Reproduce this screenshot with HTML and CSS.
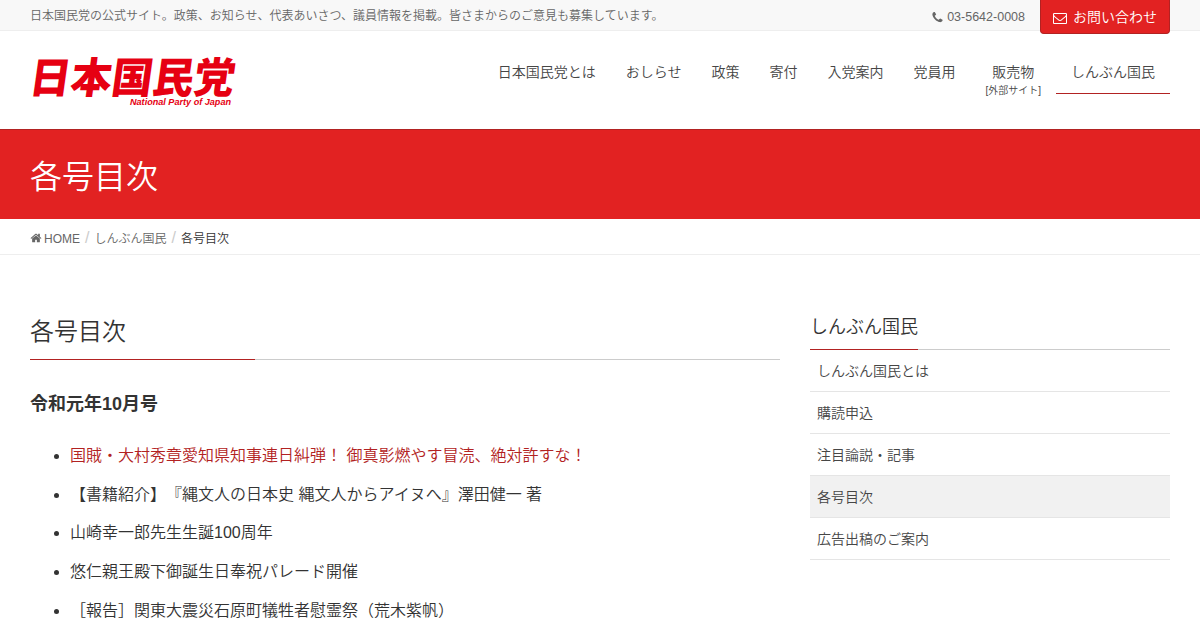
FILE: index.html
```html
<!DOCTYPE html>
<html lang="ja">
<head>
    <meta charset="UTF-8">
    <meta name="viewport" content="width=device-width, initial-scale=1.0">
    <title>各号目次 | 日本国民党</title>
    <link rel="stylesheet" href="styles.css">
</head>
<body>
    <div class="topbar">
        <div class="container topbar-inner">
            <p class="description">日本国民党の公式サイト。政策、お知らせ、代表あいさつ、議員情報を掲載。皆さまからのご意見も募集しています。</p>
            <div class="contact">
                <span class="tel">
                    <svg class="icon-phone" viewBox="0 0 1792 1792"><path d="M1600 1240q0 27-10 70.5t-21 68.5q-21 50-122 106-94 51-186 51-27 0-53-3.5t-57.5-12.5-47-14.5-55.5-20.5-49-18q-98-35-175-83-127-79-264-216t-216-264q-48-77-83-175-3-9-18-49t-20.5-55.5-14.5-47-12.5-57.5-3.5-53q0-92 51-186 56-101 106-122 25-11 68.5-21t70.5-10q14 0 21 3 18 6 53 76 11 19 30 54t35 63.5 31 53.5q3 4 17.5 25t21.5 35.5 7 28.5q0 20-28.5 50t-62 55-62 53-28.5 46q0 9 5 22.5t8.5 20.5 14 24 11.5 19q76 137 174 235t235 174q2 1 19 11.5t24 14 20.5 8.5 22.5 5q18 0 46-28.5t53-62 55-62 50-28.5q14 0 28.5 7t35.5 21.5 25 17.5q25 15 53.5 31t63.5 35 54 30q70 35 76 53 3 7 3 21z"/></svg>
                    03-5642-0008
                </span>
                <a class="btn" href="#">
                    <svg class="icon-mail" viewBox="0 0 1792 1792"><path d="M1664 1504v-768q-32 36-69 66-268 206-426 338-51 43-83 67t-86.5 48.5-102.5 24.5h-2q-48 0-102.5-24.5t-86.5-48.5-83-67q-158-132-426-338-37-30-69-66v768q0 13 9.5 22.5t22.5 9.5h1472q13 0 22.5-9.5t9.5-22.5zm0-1051v-24.5l-.5-13-3-12.5-5.5-9-9-7.5-14-2.5h-1472q-13 0-22.5 9.5t-9.5 22.5q0 168 147 284 193 152 401 317 6 5 35 29.5t46 37.5 44.5 31.5 50.5 27.5 43 9h2q20 0 43-9t50.5-27.5 44.5-31.5 46-37.5 35-29.5q208-165 401-317 54-43 100.5-115.5t46.5-131.5zm128-37v1088q0 66-47 113t-113 47h-1472q-66 0-113-47t-47-113v-1088q0-66 47-113t113-47h1472q66 0 113 47t47 113z"/></svg>
                    お問い合わせ
                </a>
            </div>
        </div>
    </div>

    <header class="site-header">
        <div class="container header-inner">
            <a class="logo" href="#">
                <svg width="230" height="80" viewBox="0 0 230 80">
                    <text class="logo-name" transform="translate(-2 54) skewX(-8)" textLength="205" lengthAdjust="spacingAndGlyphs">日本国民党</text>
                    <text class="logo-sub" x="100" y="66" textLength="101" lengthAdjust="spacingAndGlyphs">National Party of Japan</text>
                </svg>
            </a>
            <nav>
                <ul class="menu">
                    <li><a href="#">日本国民党とは</a></li>
                    <li><a href="#">おしらせ</a></li>
                    <li><a href="#">政策</a></li>
                    <li><a href="#">寄付</a></li>
                    <li><a href="#">入党案内</a></li>
                    <li><a href="#">党員用</a></li>
                    <li><a href="#">販売物<span class="note">[外部サイト]</span></a></li>
                    <li class="current"><a href="#">しんぶん国民</a></li>
                </ul>
            </nav>
        </div>
    </header>

    <div class="page-header">
        <div class="container">
            <div class="page-title">各号目次</div>
        </div>
    </div>

    <div class="breadcrumb">
        <ol class="container">
            <li><a href="#"><svg class="icon-home" viewBox="0 0 1792 1792"><path d="M1472 992v480q0 26-19 45t-45 19h-384v-384h-256v384h-384q-26 0-45-19t-19-45v-480q0-1 .5-3t.5-3l575-474 575 474q1 2 1 6zm223-69l-62 74q-8 9-21 11h-3q-13 0-21-7l-692-577-692 577q-12 8-24 7-13-2-21-11l-62-74q-8-10-7-23.5t11-21.5l719-599q32-26 76-26t76 26l244 204v-195q0-14 9-23t23-9h192q14 0 23 9t9 23v408l219 182q10 8 11 21.5t-7 23.5z"/></svg>HOME</a></li>
            <li><a href="#">しんぶん国民</a></li>
            <li>各号目次</li>
        </ol>
    </div>

    <div class="container content">
        <main>
            <h1>各号目次</h1>
            <h4>令和元年10月号</h4>
            <ul class="articles">
                <li><a href="#">国賊・大村秀章愛知県知事連日糾弾！ 御真影燃やす冒涜、絶対許すな！</a></li>
                <li>【書籍紹介】『縄文人の日本史 縄文人からアイヌへ』澤田健一 著</li>
                <li>山崎幸一郎先生生誕100周年</li>
                <li>悠仁親王殿下御誕生日奉祝パレード開催</li>
                <li>［報告］関東大震災石原町犠牲者慰霊祭（荒木紫帆）</li>
            </ul>
        </main>

        <aside>
            <h2><a href="#">しんぶん国民</a></h2>
            <ul class="side-menu">
                <li><a href="#">しんぶん国民とは</a></li>
                <li><a href="#">購読申込</a></li>
                <li><a href="#">注目論説・記事</a></li>
                <li class="current"><a href="#">各号目次</a></li>
                <li><a href="#">広告出稿のご案内</a></li>
            </ul>
        </aside>
    </div>
</body>
</html>
```
FILE: styles.css
```css
:root {
    --key-color: #e22222;
    --key-dark: #b22222;
    --text-color: #333;
}

* {
    box-sizing: border-box;
}

html {
    overflow: hidden;
}

body {
    font-family: "Liberation Sans", "Noto Sans CJK JP", sans-serif;
    font-size: 16px;
    font-weight: 350;
    line-height: 1.7;
    text-spacing-trim: space-all;
    color: var(--text-color);
    background-color: #fff;
    margin: 0;
    height: 630px;
    overflow: hidden;
}

a {
    color: inherit;
    text-decoration: none;
}

ul, ol {
    list-style: none;
    margin: 0;
    padding: 0;
}

svg {
    fill: currentColor;
}

.container {
    width: 1140px;
    margin: 0 auto;
}

.topbar {
    height: 31px;
    background-color: #f8f8f8;
    border-bottom: 1px solid #eee;
    color: #666;
    font-size: 12px;
}

.topbar-inner {
    display: flex;
    justify-content: space-between;
    align-items: flex-start;
}

.description {
    margin: 0;
    line-height: 32px;
}

.contact {
    display: flex;
    gap: 15px;
}

.tel {
    display: flex;
    align-items: center;
    gap: 3px;
    font-size: 12.5px;
    line-height: 34px;
}

.icon-phone {
    width: 13px;
    height: 13px;
}

.btn {
    display: flex;
    align-items: center;
    gap: 6px;
    width: 130px;
    height: 34px;
    padding: 2px 0 0 12px;
    background-color: var(--key-color);
    border: 1px solid var(--key-dark);
    border-top: 0;
    border-radius: 0 0 4px 4px;
    color: #fff;
    font-size: 14px;
}

.icon-mail {
    width: 14px;
    height: 14px;
}

.site-header {
    height: 98px;
}

.header-inner {
    display: flex;
    justify-content: space-between;
    padding-top: 8px;
}

.logo svg {
    display: block;
    overflow: visible;
    fill: #e60012;
}

.logo-name {
    font-family: "Noto Sans CJK JP", sans-serif;
    font-size: 42px;
    font-weight: 900;
}

.logo-sub {
    font-size: 9px;
    font-weight: bold;
    font-style: italic;
}

.menu {
    display: flex;
    padding-top: 23px;
}

.menu a {
    display: block;
    height: 32px;
    padding: 0 15px;
    color: #464646;
    font-size: 14px;
    line-height: 20px;
    text-align: center;
}

.menu .current a {
    border-bottom: 1px solid var(--key-dark);
}

.note {
    display: block;
    font-size: 10px;
    line-height: 18px;
}

.page-header {
    height: 90px;
    background-color: var(--key-color);
    border-top: 1px solid var(--key-dark);
    color: #fff;
}

.page-title {
    font-size: 32px;
    line-height: 94px;
}

.breadcrumb {
    height: 36px;
    border-bottom: 1px solid #eee;
    font-size: 12px;
}

.breadcrumb ol {
    display: flex;
    line-height: 40px;
}

.breadcrumb a {
    color: #666;
}

.breadcrumb li + li::before {
    content: "/";
    padding: 0 5px;
    color: #ccc;
    font-size: 16px;
    line-height: 1;
}

.icon-home {
    width: 12px;
    height: 12px;
    margin-right: 2px;
    vertical-align: -1px;
}

.content {
    display: grid;
    grid-template-columns: 750px 360px;
    gap: 30px;
    padding-top: 55px;
}

h1 {
    margin: 0 0 28px;
    height: 50px;
    border-bottom: 1px solid #ccc;
    border-image: linear-gradient(to right, var(--key-dark) 30%, #ccc 30%) 1;
    font-size: 24px;
    font-weight: inherit;
    line-height: 43px;
}

h4 {
    margin: 0 0 21px;
    font-size: 18px;
    line-height: 33px;
}

.articles {
    list-style: disc;
    padding-left: 40px;
}

.articles li {
    margin-bottom: 11.5px;
    line-height: 27.2px;
}

.articles a {
    color: var(--key-dark);
}

h2 {
    margin: 0;
    height: 40px;
    border-bottom: 1px solid #ccc;
    border-image: linear-gradient(to right, var(--key-dark) 30%, #ccc 30%) 1;
    font-size: 18px;
    font-weight: inherit;
    line-height: 34px;
}

.side-menu li {
    border-bottom: 1px solid #e5e5e5;
}

.side-menu a {
    display: block;
    height: 41px;
    padding-left: 7px;
    color: #464646;
    font-size: 14px;
    line-height: 43px;
}

.side-menu .current {
    background-color: #f1f1f1;
}
```
